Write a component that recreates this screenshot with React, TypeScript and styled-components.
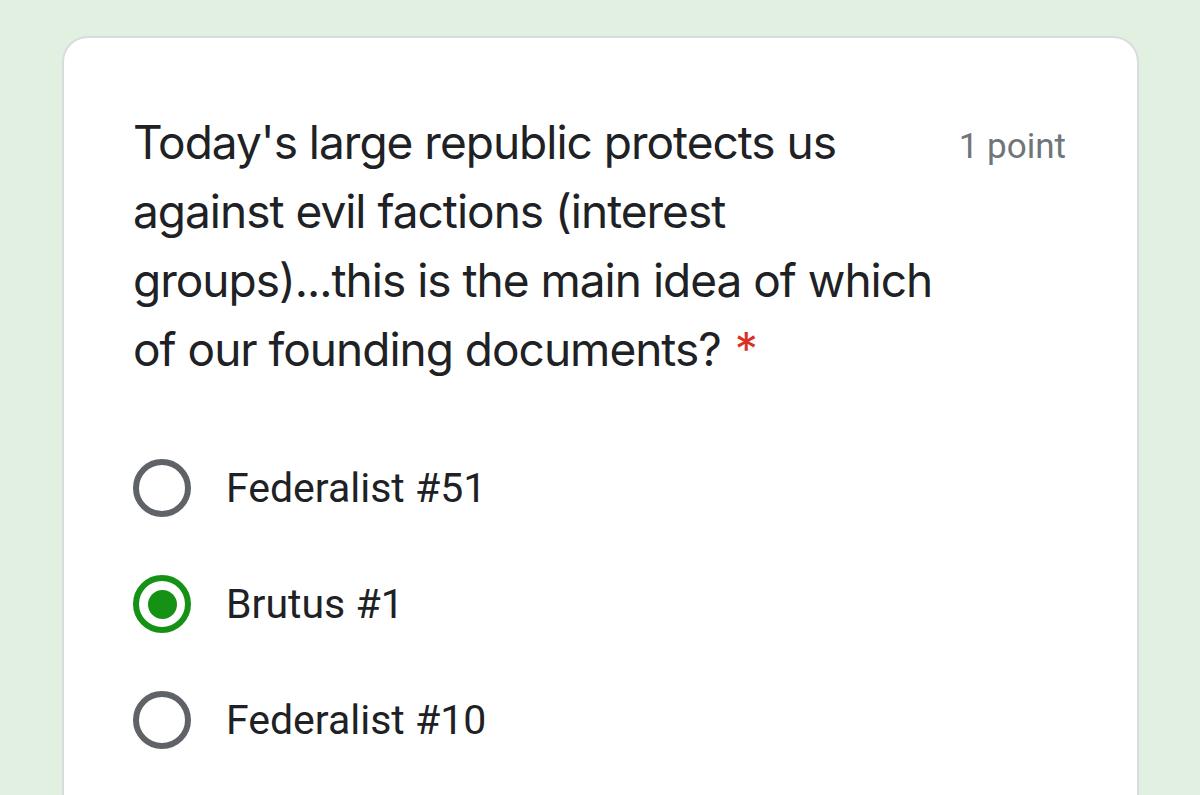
import React, { useState } from 'react';
import styled, { createGlobalStyle } from 'styled-components';

const GlobalStyle = createGlobalStyle`
  html, body {
    margin: 0;
    padding: 0;
    background-color: #e2f0e2;
    overflow: hidden;
  }
`;

const Page = styled.div`
  width: 1200px;
  height: 795px;
  padding: 36px 61px 0 62px;
  box-sizing: border-box;
  overflow: hidden;
`;

const Card = styled.div`
  background-color: #fff;
  border: 2px solid #d9dcde;
  border-bottom: none;
  border-radius: 26px 26px 0 0;
  padding: 70px 71px 0 69px;
  height: 800px;
  box-sizing: border-box;
`;

const Header = styled.div`
  display: flex;
  align-items: flex-start;
  gap: 24px;
`;

const Title = styled.div`
  flex: 1;
  font-family: 'Inter', 'Roboto', sans-serif;
  font-size: 46px;
  line-height: 69px;
  color: #202124;
  letter-spacing: -1px;
`;

const Required = styled.span`
  color: #d93025;
  margin-left: 14px;
`;

const Points = styled.div`
  font-family: 'Roboto', sans-serif;
  font-size: 35px;
  line-height: 69px;
  padding-top: 4px;
  color: #70757a;
  white-space: nowrap;
`;

const Options = styled.div`
  display: flex;
  flex-direction: column;
  margin-top: 46px;
`;

const Option = styled.label`
  display: flex;
  align-items: center;
  height: 116px;
  cursor: pointer;
`;

const Radio = styled.span<{ $checked: boolean }>`
  width: 58px;
  height: 58px;
  box-sizing: border-box;
  border-radius: 50%;
  border: 6px solid ${(p) => (p.$checked ? '#159115' : '#5f6368')};
  display: flex;
  align-items: center;
  justify-content: center;
  flex-shrink: 0;
  &::after {
    content: '';
    width: 29px;
    height: 29px;
    border-radius: 50%;
    background-color: #159115;
    display: ${(p) => (p.$checked ? 'block' : 'none')};
  }
`;

const OptionText = styled.span`
  font-family: 'Roboto', sans-serif;
  font-size: 41px;
  color: #202124;
  margin-left: 35px;
`;

const choices = ['Federalist #51', 'Brutus #1', 'Federalist #10'];

export default function App() {
  const [selected, setSelected] = useState(1);
  return (
    <>
      <GlobalStyle />
      <Page>
        <Card>
          <Header>
            <Title>
              Today's large republic protects us against evil factions (interest
              groups)...this is the main idea of which of our founding documents?
              <Required>*</Required>
            </Title>
            <Points>1 point</Points>
          </Header>
          <Options>
            {choices.map((c, i) => (
              <Option key={c} onClick={() => setSelected(i)}>
                <Radio $checked={selected === i} />
                <OptionText>{c}</OptionText>
              </Option>
            ))}
          </Options>
        </Card>
      </Page>
    </>
  );
}
